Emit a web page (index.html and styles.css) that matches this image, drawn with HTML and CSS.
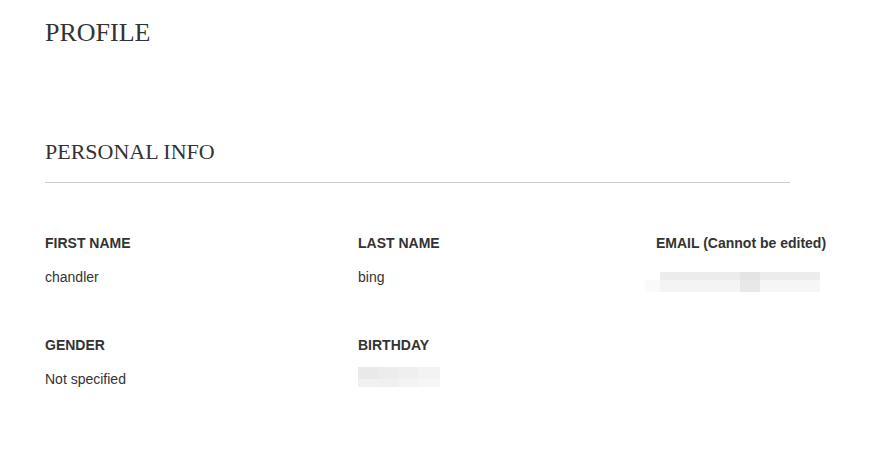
FILE: index.html
```html
<!DOCTYPE html>
<html>
<head>
<meta charset="utf-8">
<link rel="stylesheet" href="styles.css">
</head>
<body>
<main class="page">
  <h1 class="title">PROFILE</h1>
  <section class="section">
    <h2 class="section-title">PERSONAL INFO</h2>
    <div class="grid">
      <div class="field">
        <div class="label">FIRST NAME</div>
        <div class="value">chandler</div>
      </div>
      <div class="field">
        <div class="label">LAST NAME</div>
        <div class="value">bing</div>
      </div>
      <div class="field">
        <div class="label">EMAIL (Cannot be edited)</div>
        <div class="value"><span class="blur blur-email"></span></div>
      </div>
      <div class="field">
        <div class="label">GENDER</div>
        <div class="value">Not specified</div>
      </div>
      <div class="field">
        <div class="label">BIRTHDAY</div>
        <div class="value"><span class="blur blur-bday"></span></div>
      </div>
    </div>
  </section>
</main>
</body>
</html>
```
FILE: styles.css
```css
html, body {
  margin: 0;
  padding: 0;
  background: #fff;
}
.page {
  padding: 18px 0 0 45px;
  color: #333;
}
.title {
  margin: 0;
  font-family: "Liberation Serif", "Times New Roman", serif;
  font-weight: normal;
  font-size: 26px;
  line-height: 30px;
  color: #333;
}
.section {
  margin-top: 91px;
  width: 745px;
}
.section-title {
  margin: 0;
  font-family: "Liberation Serif", "Times New Roman", serif;
  font-weight: normal;
  font-size: 22px;
  line-height: 26px;
  color: #333;
  padding-bottom: 17px;
  border-bottom: 1px solid #cccccc;
}
.grid {
  display: grid;
  grid-template-columns: 313px 298px 1fr;
  row-gap: 52px;
  padding-top: 52px;
  font-family: "Liberation Sans", Arial, sans-serif;
  white-space: nowrap;
}
.label {
  font-size: 14px;
  font-weight: bold;
  line-height: 16px;
  color: #333;
}
.value {
  margin-top: 18px;
  font-size: 14px;
  line-height: 16px;
  height: 16px;
  color: #333;
  position: relative;
}
.blur {
  position: absolute;
  display: block;
}
.blur-email {
  left: -11px;
  top: 3px;
  width: 175px;
  height: 20px;
  background:
    linear-gradient(to right, transparent 0 15px, #ececec 15px 95px, #e4e4e4 95px 115px, #ececec 115px 175px) top / 100% 8px no-repeat,
    linear-gradient(to right, #fafafa 0 15px, #f4f4f4 15px 95px, #e8e8e8 95px 115px, #f6f6f6 115px 175px) bottom / 100% 12px no-repeat;
}
.blur-bday {
  left: 0;
  top: -4px;
  width: 82px;
  height: 24px;
  background:
    linear-gradient(to right, #e9e9e9 0 20px, #ececec 20px 40px, #efefef 40px 60px, #f3f3f3 60px 82px) top / 100% 12px no-repeat,
    linear-gradient(to right, #f1f1f1 0 20px, #f0f0f0 20px 40px, #f3f3f3 40px 60px, #f6f6f6 60px 82px) bottom / 100% 12px no-repeat;
}
```
